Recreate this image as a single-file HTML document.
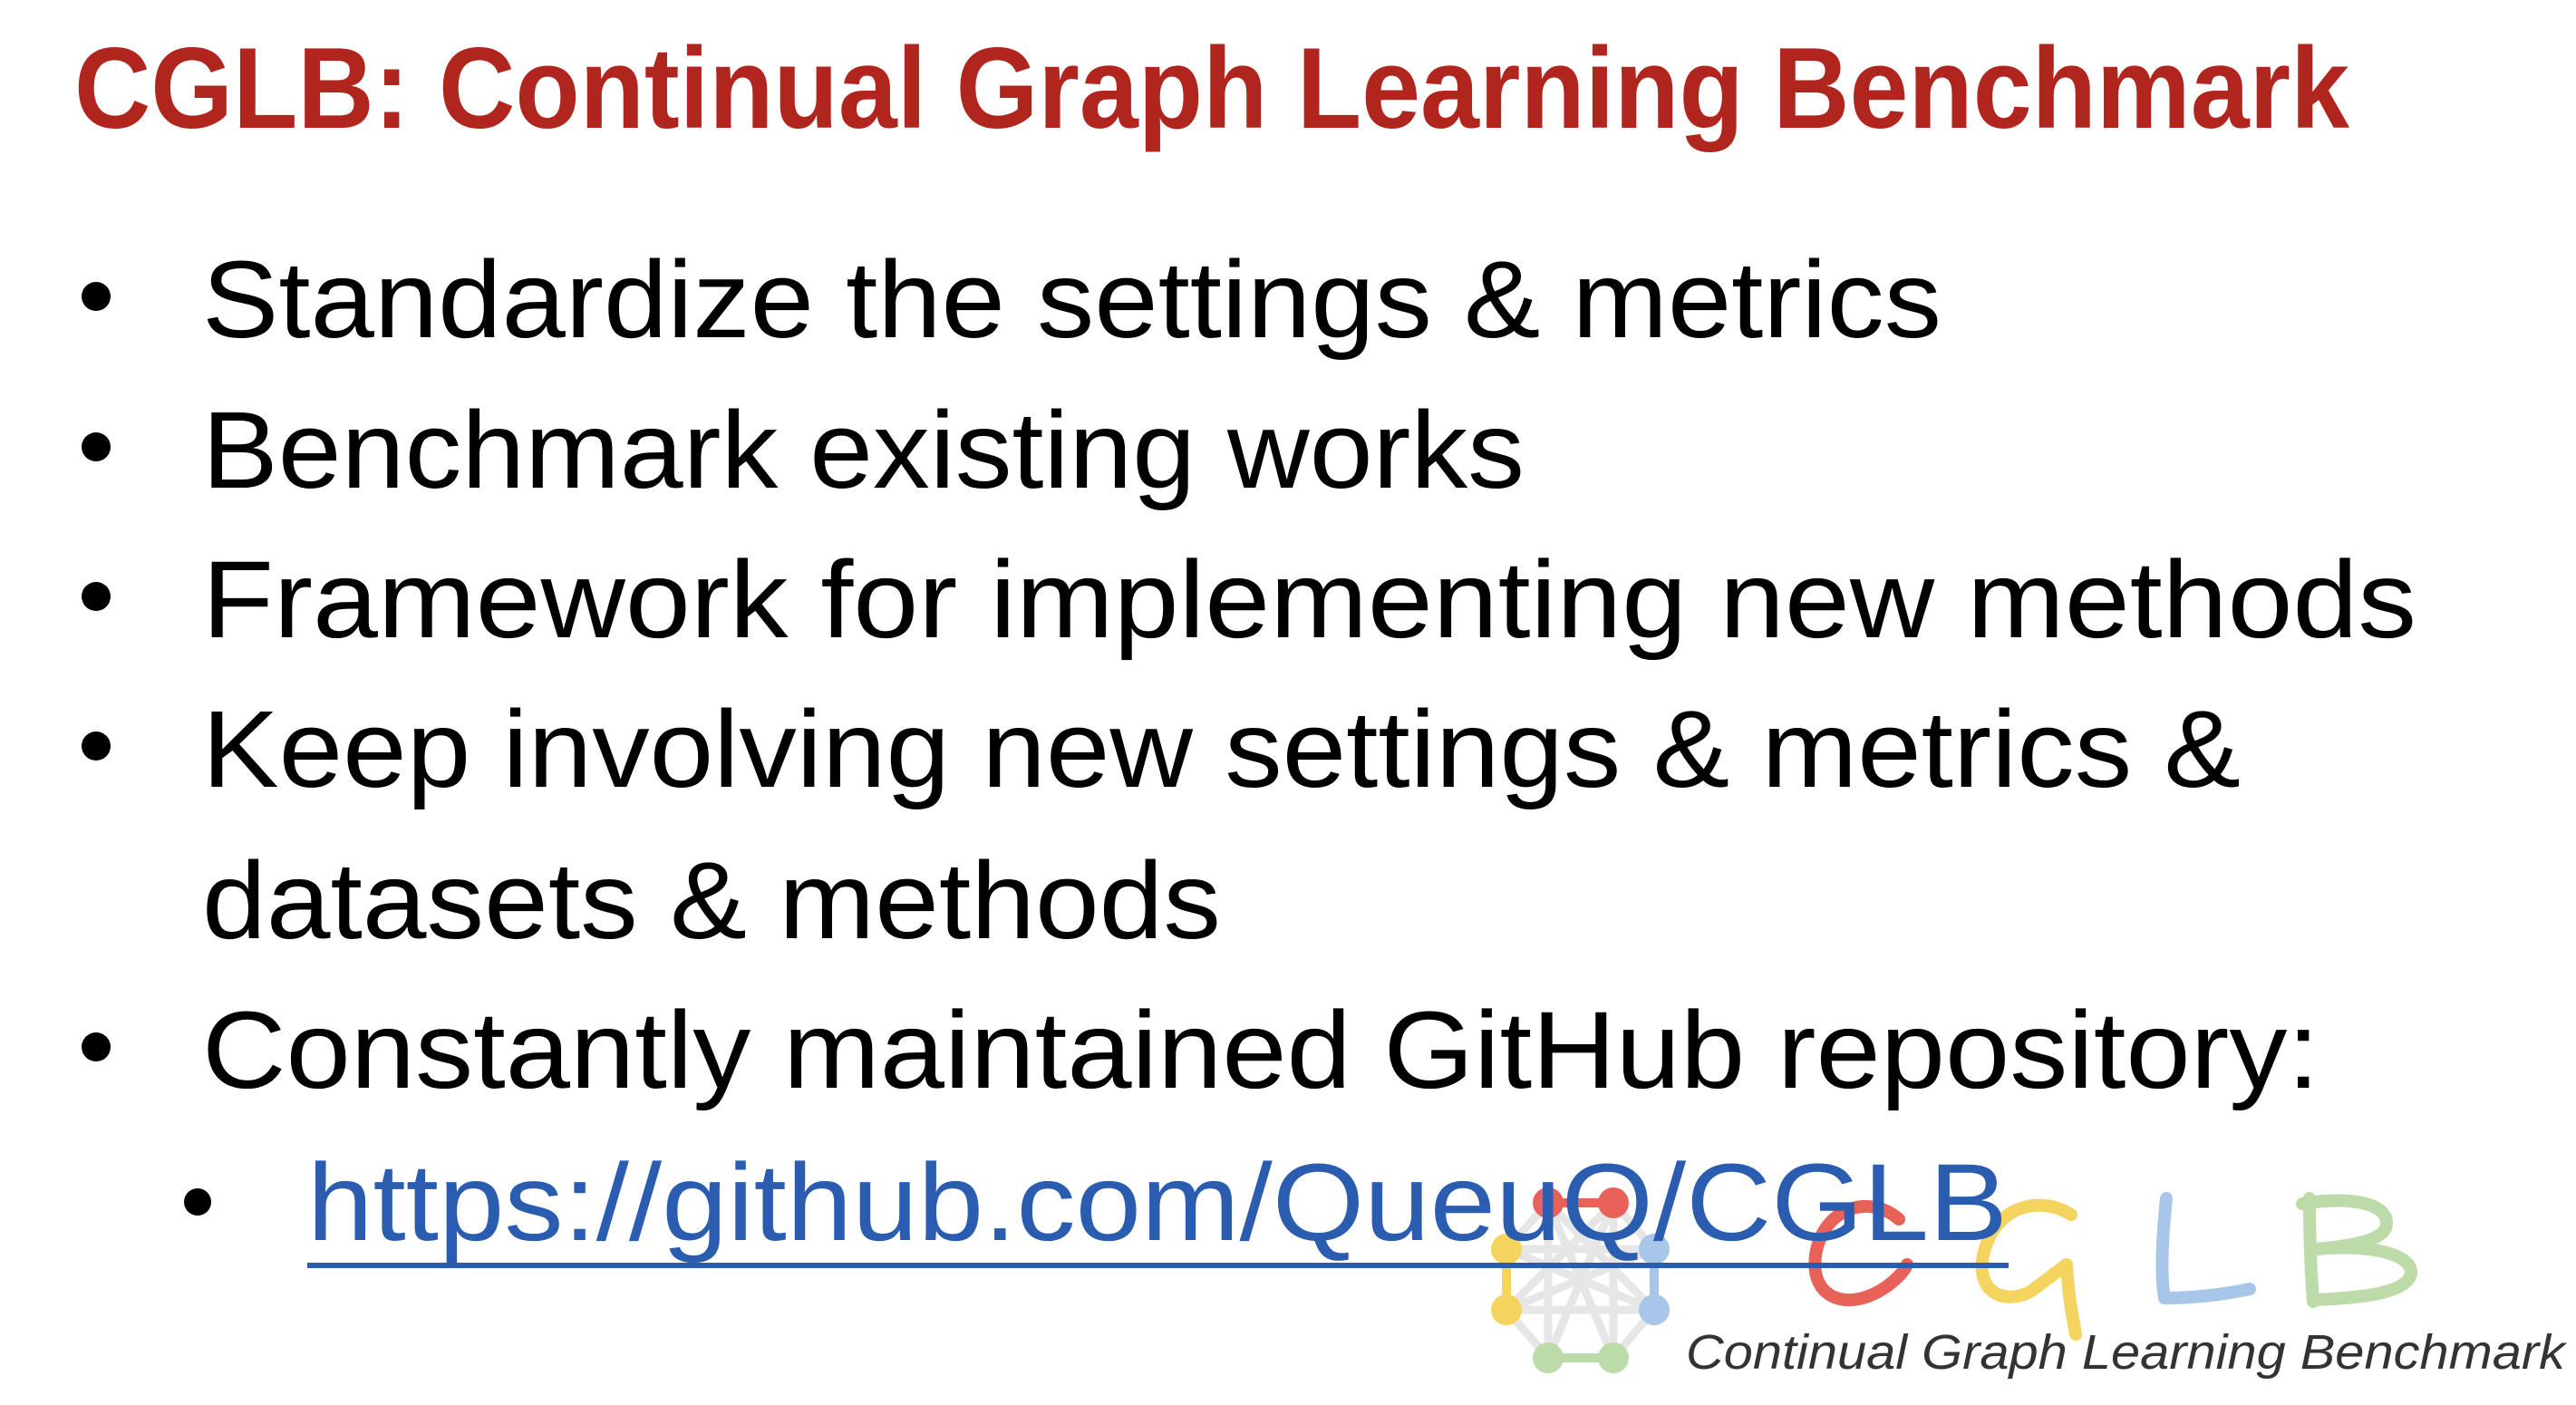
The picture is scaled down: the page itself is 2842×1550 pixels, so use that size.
<!DOCTYPE html>
<html><head><meta charset="utf-8"><style>
html,body{margin:0;padding:0;background:#fff;width:2842px;height:1550px;overflow:hidden}
svg{display:block}
</style></head><body>
<svg width="2842" height="1550" viewBox="0 0 2842 1550" xmlns="http://www.w3.org/2000/svg">
<rect width="2842" height="1550" fill="#fff"/>
<g stroke="#e6e6e6" stroke-width="9" fill="none">
<line x1="1662" y1="1378" x2="1825" y2="1378"/>
<line x1="1662" y1="1445" x2="1825" y2="1445"/>
<line x1="1662" y1="1378" x2="1825" y2="1445"/>
<line x1="1662" y1="1445" x2="1825" y2="1378"/>
<line x1="1708" y1="1327" x2="1780" y2="1498"/>
<line x1="1780" y1="1327" x2="1708" y2="1498"/>
<line x1="1708" y1="1327" x2="1708" y2="1498"/>
<line x1="1780" y1="1327" x2="1780" y2="1498"/>
<line x1="1708" y1="1327" x2="1662" y2="1378"/>
<line x1="1780" y1="1327" x2="1825" y2="1378"/>
<line x1="1662" y1="1445" x2="1708" y2="1498"/>
<line x1="1825" y1="1445" x2="1780" y2="1498"/>
<line x1="1708" y1="1327" x2="1825" y2="1445"/>
<line x1="1780" y1="1327" x2="1662" y2="1445"/>
</g>
<line x1="1708" y1="1327" x2="1780" y2="1327" stroke="#e8625a" stroke-width="10"/>
<line x1="1662" y1="1378" x2="1662" y2="1445" stroke="#f4d35e" stroke-width="10"/>
<line x1="1825" y1="1378" x2="1825" y2="1445" stroke="#a8c6e8" stroke-width="10"/>
<line x1="1708" y1="1498" x2="1780" y2="1498" stroke="#bddaa9" stroke-width="10"/>
<circle cx="1708" cy="1327" r="17" fill="#e8625a"/><circle cx="1780" cy="1327" r="17" fill="#e8625a"/>
<circle cx="1662" cy="1378" r="17" fill="#f4d35e"/><circle cx="1662" cy="1445" r="17" fill="#f4d35e"/>
<circle cx="1825" cy="1378" r="17" fill="#a8c6e8"/><circle cx="1825" cy="1445" r="17" fill="#a8c6e8"/>
<circle cx="1708" cy="1498" r="17" fill="#bddaa9"/><circle cx="1780" cy="1498" r="17" fill="#bddaa9"/>
<g fill="none" stroke-linecap="round" stroke-linejoin="round" stroke-width="14">
<path d="M2095 1345 C2060 1315 2010 1335 2003 1385 C1998 1425 2025 1440 2055 1432 C2080 1425 2100 1405 2104 1395" stroke="#e8625a"/>
<path d="M2285 1340 C2250 1318 2200 1330 2188 1385 C2180 1425 2210 1440 2240 1425 L2280 1395 C2282 1430 2286 1450 2290 1472" stroke="#f4d35e"/>
<path d="M2390 1322 C2385 1370 2384 1410 2388 1432 C2420 1432 2455 1428 2482 1422" stroke="#a8c6e8"/>
<path d="M2548 1322 C2548 1370 2550 1410 2552 1436 M2540 1328 C2600 1318 2640 1330 2632 1355 C2625 1370 2590 1375 2555 1378 C2620 1372 2662 1385 2660 1405 C2655 1428 2600 1432 2553 1434" stroke="#bddaa9"/>
</g>
<text x="1860" y="1510" font-family="Liberation Sans, sans-serif" font-style="italic" font-size="54" fill="#333" textLength="970" lengthAdjust="spacingAndGlyphs">Continual Graph Learning Benchmark</text>
<text x="82" y="141" font-family="Liberation Sans, sans-serif" font-weight="bold" font-size="127" fill="#b1251f" textLength="2510" lengthAdjust="spacingAndGlyphs">CGLB: Continual Graph Learning Benchmark</text>
<g fill="#000">
<circle cx="106" cy="327" r="16"/><circle cx="106" cy="493" r="16"/><circle cx="106" cy="658" r="16"/>
<circle cx="106" cy="823" r="16"/><circle cx="106" cy="1155" r="16"/><circle cx="218" cy="1326" r="15"/>
</g>
<g font-family="Liberation Sans, sans-serif" font-size="121" fill="#000">
<text x="223" y="372" textLength="1919" lengthAdjust="spacingAndGlyphs">Standardize the settings &amp; metrics</text>
<text x="223" y="538" textLength="1459" lengthAdjust="spacingAndGlyphs">Benchmark existing works</text>
<text x="223" y="703" textLength="2443" lengthAdjust="spacingAndGlyphs">Framework for implementing new methods</text>
<text x="223" y="868" textLength="2249" lengthAdjust="spacingAndGlyphs">Keep involving new settings &amp; metrics &amp;</text>
<text x="223" y="1035" textLength="1124" lengthAdjust="spacingAndGlyphs">datasets &amp; methods</text>
<text x="223" y="1200" textLength="2336" lengthAdjust="spacingAndGlyphs">Constantly maintained GitHub repository:</text>
<text x="339" y="1368" fill="#2a5db0" textLength="1876" lengthAdjust="spacingAndGlyphs">https://github.com/QueuQ/CGLB</text>
</g>
<rect x="339" y="1393" width="1877" height="6" fill="#2a5db0"/>
</svg>
</body></html>
